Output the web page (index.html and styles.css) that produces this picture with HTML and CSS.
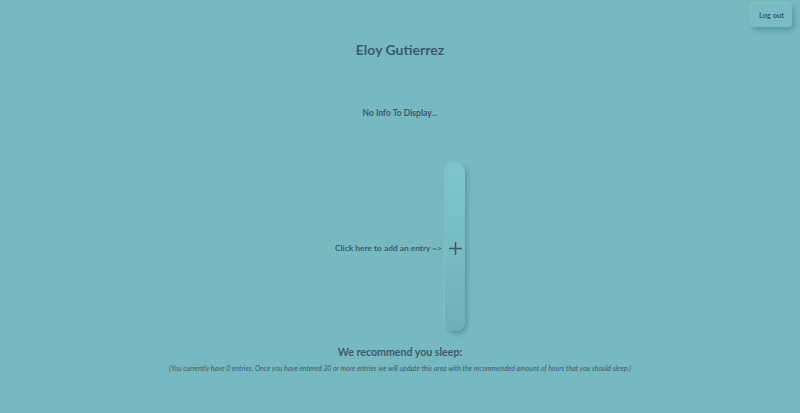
FILE: index.html
```html
<!DOCTYPE html>
<html>
<head>
<meta charset="utf-8">
<link rel="stylesheet" href="styles.css">
</head>
<body>
<button class="logout">Log out</button>
<main class="page">
  <h1 class="name">Eloy Gutierrez</h1>
  <p class="info">No Info To Display...</p>
  <div class="add-row">
    <span class="add-label">Click here to add an entry =&gt;</span>
    <div class="add-bar">
      <svg class="plus" width="13" height="13" viewBox="0 0 13 13"><path d="M6.5 0V13M0 6.5H13" stroke="#3f5b6b" stroke-width="1.6" fill="none"/></svg>
    </div>
  </div>
  <h2 class="recommend">We recommend you sleep:</h2>
  <p class="note">(You currently have 0 entries. Once you have entered 30 or more entries we will update this area with the recommended amount of hours that you should sleep.)</p>
</main>
</body>
</html>
```
FILE: styles.css
```css
html, body {
  margin: 0;
  padding: 0;
}
body {
  background: #76b9c1;
  color: #3e5a6b;
  font-family: Lato, "Open Sans", sans-serif;
  width: 800px;
  height: 413px;
  overflow: hidden;
  position: relative;
}
.logout {
  position: absolute;
  top: 4px;
  right: 8px;
  width: 41px;
  height: 23px;
  border: none;
  border-radius: 3px;
  background: #78bcc4;
  color: #3e5a6b;
  font-family: inherit;
  font-weight: 700;
  font-size: 7.5px;
  padding: 0;
  box-shadow: 2px 3px 5px rgba(40, 90, 100, 0.35), -1px -1px 3px rgba(170, 225, 230, 0.5);
}
.page {
  display: flex;
  flex-direction: column;
  align-items: center;
}
.name {
  margin: 41px 0 0;
  font-size: 14px;
  line-height: 18px;
  font-weight: 700;
}
.info {
  margin: 48px 0 0;
  font-size: 8.5px;
  line-height: 12px;
  font-weight: 700;
}
.add-row {
  margin-top: 44px;
  display: flex;
  align-items: center;
  gap: 3px;
}
.add-label {
  font-size: 8.4px;
  font-weight: 700;
  line-height: 12px;
  margin-top: 1px;
}
.add-bar {
  width: 20px;
  height: 168px;
  border-radius: 9px;
  background: linear-gradient(180deg, #80c4cc 0%, #78bcc4 50%, #6fafb8 100%);
  box-shadow: 2px 3px 4px rgba(40, 90, 100, 0.35), -1px -1px 2px rgba(170, 225, 230, 0.4);
  display: flex;
  align-items: center;
  justify-content: center;
}
.plus {
  display: block;
  margin-top: 2px;
}
.recommend {
  margin: 14px 0 0;
  font-size: 10.6px;
  line-height: 15px;
  font-weight: 700;
}
.note {
  margin: 4px 0 0;
  font-size: 7px;
  line-height: 9px;
  font-style: italic;
}
```
